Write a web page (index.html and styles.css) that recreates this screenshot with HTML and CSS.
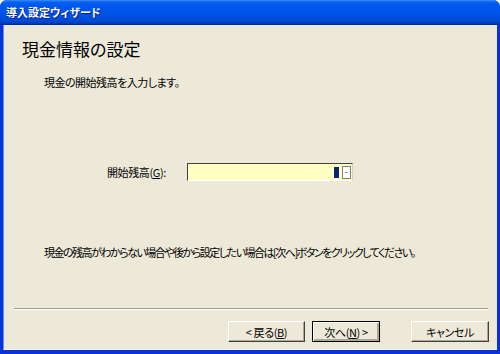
FILE: index.html
```html
<!DOCTYPE html>
<html lang="ja">
<head>
    <meta charset="UTF-8">
    <title>導入設定ウィザード</title>
    <link rel="stylesheet" href="styles.css">
</head>
<body>
    <div class="window">
        <div class="titlebar">導入設定ウィザード</div>
        <div class="client">
            <h1 class="heading">現金情報の設定</h1>
            <p class="desc">現金の開始残高を入力します。</p>

            <div class="field-row">
                <label class="field-label" for="balance">開始残高(<u>G</u>):</label>
                <div class="field-box">
                    <span class="caret"></span>
                    <span class="drop-btn">-</span>
                </div>
            </div>

            <p class="note">現金の残高がわからない場合や後から設定したい場合は[次へ]ボタンをクリックしてください。</p>

            <div class="separator"></div>

            <div class="buttons">
                <button class="btn">&lt; 戻る(<u>B</u>)</button>
                <button class="btn default">次へ(<u>N</u>) &gt;</button>
                <button class="btn cancel">キャンセル</button>
            </div>
        </div>
    </div>
</body>
</html>
```

FILE: styles.css
```css
body {
    margin: 0;
    width: 500px;
    height: 354px;
    overflow: hidden;
    font-family: "Noto Sans CJK JP", "Liberation Sans", sans-serif;
    font-feature-settings: "palt";
    background: #ffffff;
}

.window {
    width: 500px;
    height: 354px;
    box-sizing: border-box;
    display: flex;
    flex-direction: column;
    background: #0831d9;
    border-radius: 7px 7px 0 0;
    overflow: hidden;
}

.titlebar {
    height: 25px;
    box-sizing: border-box;
    padding-left: 6px;
    line-height: 24px;
    color: #ffffff;
    font-size: 11px;
    font-weight: bold;
    text-shadow: 1px 1px 0 #0a1c8c;
    background: linear-gradient(to bottom, #3d8cf6 0px, #0a63ef 2px, #0058ee 5px, #0053e5 14px, #0049d6 21px, #0036b0 24px, #001f8c 25px);
}

.client {
    flex: 1;
    margin: 0 3px 4px 3px;
    background: #ece9d8;
    border-left: 1px solid #5b8ff0;
    border-bottom: 1px solid #f4f4f4;
    padding: 13px 0 0 18px;
    display: flex;
    flex-direction: column;
    font-size: 11px;
    color: #000000;
}

.heading {
    margin: 0;
    font-size: 17px;
    font-weight: normal;
    line-height: 22px;
}

.desc {
    margin: 14px 0 0 22px;
    line-height: 16px;
    letter-spacing: -0.5px;
}

.field-row {
    display: flex;
    align-items: center;
    margin: 73px 0 0 85px;
}

.field-label {
    width: 80px;
    line-height: 16px;
    letter-spacing: -0.4px;
}

.field-box {
    width: 166px;
    height: 18px;
    box-sizing: border-box;
    background: #ffffc4;
    border-top: 1px solid #404040;
    border-left: 1px solid #404040;
    border-right: 1px solid #d4d0c8;
    border-bottom: 1px solid #ffffff;
    display: flex;
    justify-content: flex-end;
    align-items: center;
    padding-right: 1px;
}

.caret {
    width: 5px;
    height: 11px;
    background: #0a246a;
    border-left: 1px solid #ffffff;
    border-right: 1px solid #ffffff;
    margin-right: 2px;
}

.drop-btn {
    width: 9px;
    height: 13px;
    box-sizing: border-box;
    background: #ffffff;
    border: 1px solid #808080;
    font-size: 8px;
    line-height: 10px;
    text-align: center;
}

.note {
    margin: 63px 0 0 22px;
    line-height: 16px;
    letter-spacing: -1.5px;
}

.separator {
    margin: 48px 9px 0 -8px;
    height: 1px;
    background: #9d9b8c;
    border-bottom: 1px solid #ffffff;
}

.buttons {
    display: flex;
    margin: 11px 0 0 206px;
}

.btn {
    width: 77px;
    height: 21px;
    box-sizing: border-box;
    margin-right: 7px;
    padding: 0;
    font-family: inherit;
    font-feature-settings: "palt";
    font-size: 11px;
    letter-spacing: -0.4px;
    color: #000000;
    background: #ece9d8;
    border-top: 1px solid #ffffff;
    border-left: 1px solid #ffffff;
    border-right: 1px solid #404040;
    border-bottom: 1px solid #404040;
    box-shadow: inset -1px -1px 0 #aca899;
}

.btn.default {
    width: 68px;
    border: 1px solid #000000;
    box-shadow: inset 1px 1px 0 #ffffff, inset -2px -2px 0 #aca899;
}

.btn.cancel {
    margin-left: 24px;
    width: 78px;
}
```
